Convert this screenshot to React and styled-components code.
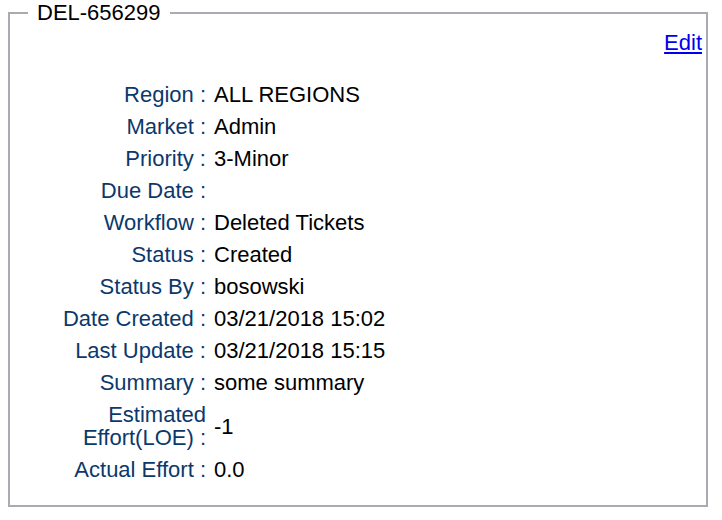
import styled, { createGlobalStyle } from "styled-components";

const GlobalStyle = createGlobalStyle`
  html, body {
    margin: 0;
    padding: 0;
    background: #ffffff;
  }
  body {
    font-family: "Liberation Sans", Arial, Helvetica, sans-serif;
  }
`;

const fields = [
	{ label: "Region :", value: "ALL REGIONS" },
	{ label: "Market :", value: "Admin" },
	{ label: "Priority :", value: "3-Minor" },
	{ label: "Due Date :", value: "" },
	{ label: "Workflow :", value: "Deleted Tickets" },
	{ label: "Status :", value: "Created" },
	{ label: "Status By :", value: "bosowski" },
	{ label: "Date Created :", value: "03/21/2018 15:02" },
	{ label: "Last Update :", value: "03/21/2018 15:15" },
	{ label: "Summary :", value: "some summary" },
	{ label: "Estimated Effort(LOE) :", value: "-1" },
	{ label: "Actual Effort :", value: "0.0" },
];

export default function App() {
	return (
		<Page>
			<GlobalStyle />
			<TicketBox>
				<TicketId>DEL-656299</TicketId>
				<EditBar>
					<EditLink href="#edit" onClick={(e) => e.preventDefault()}>
						Edit
					</EditLink>
				</EditBar>
				<Details>
					{fields.map(({ label, value }) => (
						<Row key={label}>
							<Label>{label}</Label>
							<Value>{value}</Value>
						</Row>
					))}
				</Details>
			</TicketBox>
		</Page>
	);
}

const Page = styled.div`
	padding: 0 8px;
	font-size: 22px;
	line-height: 23px;
`;

const TicketBox = styled.fieldset`
	box-sizing: border-box;
	width: 700px;
	height: 507px;
	margin: 0;
	padding: 5px 4px 0 18px;
	border: 2px solid #a9abb1;
	min-inline-size: 0;
`;

const TicketId = styled.legend`
	padding: 0 9px;
	font-size: 22px;
	line-height: 26px;
	color: #000000;
`;

const EditBar = styled.div`
	display: flex;
	justify-content: flex-end;
	height: 23px;
`;

const EditLink = styled.a`
	color: #0000ee;
	text-decoration: underline;
	font-size: 22px;
`;

const Details = styled.div`
	display: grid;
	grid-template-columns: 150px 1fr;
	row-gap: 9px;
	margin-top: 29px;
	margin-left: 28px;
`;

const Row = styled.div`
	display: contents;
`;

const Label = styled.div`
	color: #0b396b;
	text-align: right;
	align-self: center;
`;

const Value = styled.div`
	color: #000000;
	padding-left: 8px;
	align-self: center;
	min-height: 23px;
`;
